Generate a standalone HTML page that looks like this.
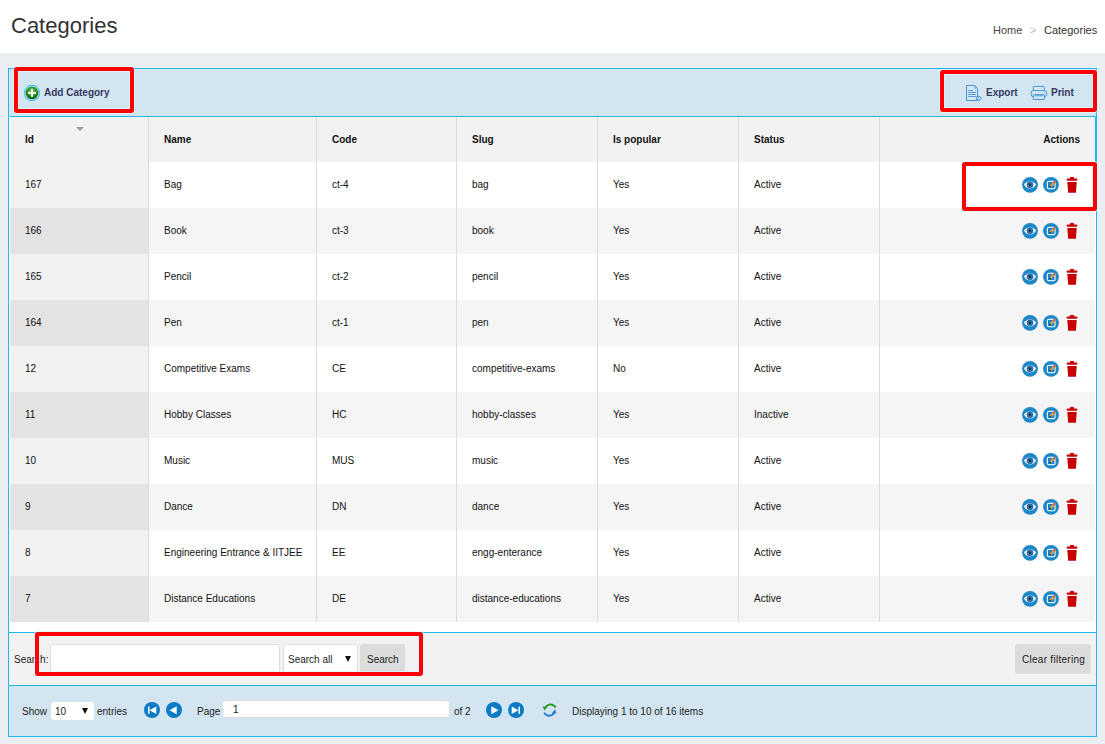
<!DOCTYPE html>
<html><head><meta charset="utf-8">
<style>
*{box-sizing:border-box}
html,body{margin:0;padding:0}
body{width:1105px;height:744px;overflow:hidden;background:#eaeef3;font-family:"Liberation Sans",sans-serif;color:#333;position:relative}
.box,.th,.td,.abs,.acts{position:absolute}
.hdr{position:absolute;left:0;top:0;width:1105px;height:53px;background:#fff}
.title{position:absolute;left:11px;top:13px;font-size:22px;color:#333;white-space:nowrap;line-height:25px}
.bc{position:absolute;top:24px;left:993px;font-size:11px;color:#444;white-space:nowrap;line-height:13px}
.bc .sep{position:absolute;left:37px;color:#bbb}
.bc .cur{position:absolute;left:51px;color:#333}
.th{font-size:10px;font-weight:bold;color:#111;line-height:45px;white-space:nowrap}
.td{font-size:10px;color:#111;line-height:46px;white-space:nowrap}
.sort{position:absolute;left:76px;top:127px;width:0;height:0;border-left:4px solid transparent;border-right:4px solid transparent;border-top:4px solid #999}
.acts{left:1021px;height:46px;width:60px}
.tbt{font-size:10px;font-weight:bold;color:#353a60;line-height:12px;white-space:nowrap}
.txt{font-size:10px;color:#222;line-height:12px;white-space:nowrap}
.inp{background:#fff;border:1px solid #dedede;border-radius:3px}
.inp2{background:#fff;border-radius:3px}
.btn{background:#dcdcdc;border-radius:3px}
.tri{width:0;height:0;border-left:3.5px solid transparent;border-right:3.5px solid transparent;border-top:6px solid #111}
.red{position:absolute;border:4px solid #ff0000;border-radius:3px;box-shadow:0 0 0 1px rgba(215,250,255,0.7),inset 0 0 0 1px rgba(215,250,255,0.7)}

</style></head><body>
<div class="hdr"><div class="title">Categories</div><div class="bc"><span class="home">Home</span><span class="sep">&gt;</span><span class="cur">Categories</span></div></div>
<div class="box" style="left:8px;top:68px;width:1089px;height:669px;border:1px solid #1db9ee;background:#fff"></div>
<div class="box" style="left:9px;top:69px;width:1087px;height:47px;background:#d3e5f0"></div>
<div class="box" style="left:10px;top:116px;width:1086px;height:1px;background:#1db9ee"></div>
<div class="box" style="left:1095px;top:116px;width:1px;height:46px;background:#1db9ee"></div>
<div class="box" style="left:10px;top:117px;width:1085px;height:45px;background:#f2f2f2"></div>
<div class="box" style="left:10px;top:162px;width:1085px;height:46px;background:#fff"></div><div class="box" style="left:10px;top:162px;width:138px;height:46px;background:#f2f2f2"></div>
<div class="box" style="left:10px;top:208px;width:1085px;height:46px;background:#f5f5f5"></div><div class="box" style="left:10px;top:208px;width:138px;height:46px;background:#e3e3e3"></div>
<div class="box" style="left:10px;top:254px;width:1085px;height:46px;background:#fff"></div><div class="box" style="left:10px;top:254px;width:138px;height:46px;background:#f2f2f2"></div>
<div class="box" style="left:10px;top:300px;width:1085px;height:46px;background:#f5f5f5"></div><div class="box" style="left:10px;top:300px;width:138px;height:46px;background:#e3e3e3"></div>
<div class="box" style="left:10px;top:346px;width:1085px;height:46px;background:#fff"></div><div class="box" style="left:10px;top:346px;width:138px;height:46px;background:#f2f2f2"></div>
<div class="box" style="left:10px;top:392px;width:1085px;height:46px;background:#f5f5f5"></div><div class="box" style="left:10px;top:392px;width:138px;height:46px;background:#e3e3e3"></div>
<div class="box" style="left:10px;top:438px;width:1085px;height:46px;background:#fff"></div><div class="box" style="left:10px;top:438px;width:138px;height:46px;background:#f2f2f2"></div>
<div class="box" style="left:10px;top:484px;width:1085px;height:46px;background:#f5f5f5"></div><div class="box" style="left:10px;top:484px;width:138px;height:46px;background:#e3e3e3"></div>
<div class="box" style="left:10px;top:530px;width:1085px;height:46px;background:#fff"></div><div class="box" style="left:10px;top:530px;width:138px;height:46px;background:#f2f2f2"></div>
<div class="box" style="left:10px;top:576px;width:1085px;height:46px;background:#f5f5f5"></div><div class="box" style="left:10px;top:576px;width:138px;height:46px;background:#e3e3e3"></div>
<div class="box" style="left:148px;top:117px;width:1px;height:505px;background:#dcdcdc"></div><div class="box" style="left:316px;top:117px;width:1px;height:505px;background:#dcdcdc"></div><div class="box" style="left:456px;top:117px;width:1px;height:505px;background:#dcdcdc"></div><div class="box" style="left:597px;top:117px;width:1px;height:505px;background:#dcdcdc"></div><div class="box" style="left:738px;top:117px;width:1px;height:505px;background:#dcdcdc"></div><div class="box" style="left:879px;top:117px;width:1px;height:505px;background:#dcdcdc"></div>
<div class="th" style="left:25px;top:117px">Id</div><div class="th" style="left:164px;top:117px">Name</div><div class="th" style="left:332px;top:117px">Code</div><div class="th" style="left:472px;top:117px">Slug</div><div class="th" style="left:613px;top:117px">Is popular</div><div class="th" style="left:754px;top:117px">Status</div><div class="th" style="right:25px;top:117px">Actions</div>
<div class="sort"></div>
<div class="td" style="left:25px;top:162px">167</div><div class="td" style="left:164px;top:162px">Bag</div><div class="td" style="left:332px;top:162px">ct-4</div><div class="td" style="left:472px;top:162px">bag</div><div class="td" style="left:613px;top:162px">Yes</div><div class="td" style="left:754px;top:162px">Active</div><div class="acts" style="top:162px"><svg width="60" height="46" viewBox="0 0 60 46" style="position:absolute;left:0;top:0"><circle cx="9" cy="22.8" r="7.9" fill="#1d87c8"/><path d="M3,22.8 C6,17.9 12,17.9 15,22.8 C12,27.7 6,27.7 3,22.8 Z" fill="#fff"/><circle cx="9" cy="22.8" r="3" fill="#2a7cc2" stroke="#17487a" stroke-width="0.7"/><circle cx="9" cy="22.8" r="1.2" fill="#0d2440"/><circle cx="30" cy="22.8" r="7.9" fill="#1d87c8"/><rect x="26.4" y="19.3" width="7.6" height="7.4" rx="1.2" fill="#1a80d0" stroke="#e2f2fd" stroke-width="1.2"/><path d="M29.6,24.2 L32.9,20.6" stroke="#f5a31e" stroke-width="2.2"/><path d="M32.6,20.9 L33.9,19.5" stroke="#e8363e" stroke-width="2"/><path d="M28.9,25 L29.7,24.1" stroke="#1b2a4a" stroke-width="1.2"/><rect x="48.8" y="14.9" width="4.4" height="2.2" rx="1" fill="#c80000"/><rect x="45.6" y="16.4" width="10.8" height="2.4" rx="1" fill="#c80000"/><path d="M46.3,20 L55.7,20 L54.9,30.8 L47.2,30.8 Z" fill="#c80000"/></svg>
</div>
<div class="td" style="left:25px;top:208px">166</div><div class="td" style="left:164px;top:208px">Book</div><div class="td" style="left:332px;top:208px">ct-3</div><div class="td" style="left:472px;top:208px">book</div><div class="td" style="left:613px;top:208px">Yes</div><div class="td" style="left:754px;top:208px">Active</div><div class="acts" style="top:208px"><svg width="60" height="46" viewBox="0 0 60 46" style="position:absolute;left:0;top:0"><circle cx="9" cy="22.8" r="7.9" fill="#1d87c8"/><path d="M3,22.8 C6,17.9 12,17.9 15,22.8 C12,27.7 6,27.7 3,22.8 Z" fill="#fff"/><circle cx="9" cy="22.8" r="3" fill="#2a7cc2" stroke="#17487a" stroke-width="0.7"/><circle cx="9" cy="22.8" r="1.2" fill="#0d2440"/><circle cx="30" cy="22.8" r="7.9" fill="#1d87c8"/><rect x="26.4" y="19.3" width="7.6" height="7.4" rx="1.2" fill="#1a80d0" stroke="#e2f2fd" stroke-width="1.2"/><path d="M29.6,24.2 L32.9,20.6" stroke="#f5a31e" stroke-width="2.2"/><path d="M32.6,20.9 L33.9,19.5" stroke="#e8363e" stroke-width="2"/><path d="M28.9,25 L29.7,24.1" stroke="#1b2a4a" stroke-width="1.2"/><rect x="48.8" y="14.9" width="4.4" height="2.2" rx="1" fill="#c80000"/><rect x="45.6" y="16.4" width="10.8" height="2.4" rx="1" fill="#c80000"/><path d="M46.3,20 L55.7,20 L54.9,30.8 L47.2,30.8 Z" fill="#c80000"/></svg>
</div>
<div class="td" style="left:25px;top:254px">165</div><div class="td" style="left:164px;top:254px">Pencil</div><div class="td" style="left:332px;top:254px">ct-2</div><div class="td" style="left:472px;top:254px">pencil</div><div class="td" style="left:613px;top:254px">Yes</div><div class="td" style="left:754px;top:254px">Active</div><div class="acts" style="top:254px"><svg width="60" height="46" viewBox="0 0 60 46" style="position:absolute;left:0;top:0"><circle cx="9" cy="22.8" r="7.9" fill="#1d87c8"/><path d="M3,22.8 C6,17.9 12,17.9 15,22.8 C12,27.7 6,27.7 3,22.8 Z" fill="#fff"/><circle cx="9" cy="22.8" r="3" fill="#2a7cc2" stroke="#17487a" stroke-width="0.7"/><circle cx="9" cy="22.8" r="1.2" fill="#0d2440"/><circle cx="30" cy="22.8" r="7.9" fill="#1d87c8"/><rect x="26.4" y="19.3" width="7.6" height="7.4" rx="1.2" fill="#1a80d0" stroke="#e2f2fd" stroke-width="1.2"/><path d="M29.6,24.2 L32.9,20.6" stroke="#f5a31e" stroke-width="2.2"/><path d="M32.6,20.9 L33.9,19.5" stroke="#e8363e" stroke-width="2"/><path d="M28.9,25 L29.7,24.1" stroke="#1b2a4a" stroke-width="1.2"/><rect x="48.8" y="14.9" width="4.4" height="2.2" rx="1" fill="#c80000"/><rect x="45.6" y="16.4" width="10.8" height="2.4" rx="1" fill="#c80000"/><path d="M46.3,20 L55.7,20 L54.9,30.8 L47.2,30.8 Z" fill="#c80000"/></svg>
</div>
<div class="td" style="left:25px;top:300px">164</div><div class="td" style="left:164px;top:300px">Pen</div><div class="td" style="left:332px;top:300px">ct-1</div><div class="td" style="left:472px;top:300px">pen</div><div class="td" style="left:613px;top:300px">Yes</div><div class="td" style="left:754px;top:300px">Active</div><div class="acts" style="top:300px"><svg width="60" height="46" viewBox="0 0 60 46" style="position:absolute;left:0;top:0"><circle cx="9" cy="22.8" r="7.9" fill="#1d87c8"/><path d="M3,22.8 C6,17.9 12,17.9 15,22.8 C12,27.7 6,27.7 3,22.8 Z" fill="#fff"/><circle cx="9" cy="22.8" r="3" fill="#2a7cc2" stroke="#17487a" stroke-width="0.7"/><circle cx="9" cy="22.8" r="1.2" fill="#0d2440"/><circle cx="30" cy="22.8" r="7.9" fill="#1d87c8"/><rect x="26.4" y="19.3" width="7.6" height="7.4" rx="1.2" fill="#1a80d0" stroke="#e2f2fd" stroke-width="1.2"/><path d="M29.6,24.2 L32.9,20.6" stroke="#f5a31e" stroke-width="2.2"/><path d="M32.6,20.9 L33.9,19.5" stroke="#e8363e" stroke-width="2"/><path d="M28.9,25 L29.7,24.1" stroke="#1b2a4a" stroke-width="1.2"/><rect x="48.8" y="14.9" width="4.4" height="2.2" rx="1" fill="#c80000"/><rect x="45.6" y="16.4" width="10.8" height="2.4" rx="1" fill="#c80000"/><path d="M46.3,20 L55.7,20 L54.9,30.8 L47.2,30.8 Z" fill="#c80000"/></svg>
</div>
<div class="td" style="left:25px;top:346px">12</div><div class="td" style="left:164px;top:346px">Competitive Exams</div><div class="td" style="left:332px;top:346px">CE</div><div class="td" style="left:472px;top:346px">competitive-exams</div><div class="td" style="left:613px;top:346px">No</div><div class="td" style="left:754px;top:346px">Active</div><div class="acts" style="top:346px"><svg width="60" height="46" viewBox="0 0 60 46" style="position:absolute;left:0;top:0"><circle cx="9" cy="22.8" r="7.9" fill="#1d87c8"/><path d="M3,22.8 C6,17.9 12,17.9 15,22.8 C12,27.7 6,27.7 3,22.8 Z" fill="#fff"/><circle cx="9" cy="22.8" r="3" fill="#2a7cc2" stroke="#17487a" stroke-width="0.7"/><circle cx="9" cy="22.8" r="1.2" fill="#0d2440"/><circle cx="30" cy="22.8" r="7.9" fill="#1d87c8"/><rect x="26.4" y="19.3" width="7.6" height="7.4" rx="1.2" fill="#1a80d0" stroke="#e2f2fd" stroke-width="1.2"/><path d="M29.6,24.2 L32.9,20.6" stroke="#f5a31e" stroke-width="2.2"/><path d="M32.6,20.9 L33.9,19.5" stroke="#e8363e" stroke-width="2"/><path d="M28.9,25 L29.7,24.1" stroke="#1b2a4a" stroke-width="1.2"/><rect x="48.8" y="14.9" width="4.4" height="2.2" rx="1" fill="#c80000"/><rect x="45.6" y="16.4" width="10.8" height="2.4" rx="1" fill="#c80000"/><path d="M46.3,20 L55.7,20 L54.9,30.8 L47.2,30.8 Z" fill="#c80000"/></svg>
</div>
<div class="td" style="left:25px;top:392px">11</div><div class="td" style="left:164px;top:392px">Hobby Classes</div><div class="td" style="left:332px;top:392px">HC</div><div class="td" style="left:472px;top:392px">hobby-classes</div><div class="td" style="left:613px;top:392px">Yes</div><div class="td" style="left:754px;top:392px">Inactive</div><div class="acts" style="top:392px"><svg width="60" height="46" viewBox="0 0 60 46" style="position:absolute;left:0;top:0"><circle cx="9" cy="22.8" r="7.9" fill="#1d87c8"/><path d="M3,22.8 C6,17.9 12,17.9 15,22.8 C12,27.7 6,27.7 3,22.8 Z" fill="#fff"/><circle cx="9" cy="22.8" r="3" fill="#2a7cc2" stroke="#17487a" stroke-width="0.7"/><circle cx="9" cy="22.8" r="1.2" fill="#0d2440"/><circle cx="30" cy="22.8" r="7.9" fill="#1d87c8"/><rect x="26.4" y="19.3" width="7.6" height="7.4" rx="1.2" fill="#1a80d0" stroke="#e2f2fd" stroke-width="1.2"/><path d="M29.6,24.2 L32.9,20.6" stroke="#f5a31e" stroke-width="2.2"/><path d="M32.6,20.9 L33.9,19.5" stroke="#e8363e" stroke-width="2"/><path d="M28.9,25 L29.7,24.1" stroke="#1b2a4a" stroke-width="1.2"/><rect x="48.8" y="14.9" width="4.4" height="2.2" rx="1" fill="#c80000"/><rect x="45.6" y="16.4" width="10.8" height="2.4" rx="1" fill="#c80000"/><path d="M46.3,20 L55.7,20 L54.9,30.8 L47.2,30.8 Z" fill="#c80000"/></svg>
</div>
<div class="td" style="left:25px;top:438px">10</div><div class="td" style="left:164px;top:438px">Music</div><div class="td" style="left:332px;top:438px">MUS</div><div class="td" style="left:472px;top:438px">music</div><div class="td" style="left:613px;top:438px">Yes</div><div class="td" style="left:754px;top:438px">Active</div><div class="acts" style="top:438px"><svg width="60" height="46" viewBox="0 0 60 46" style="position:absolute;left:0;top:0"><circle cx="9" cy="22.8" r="7.9" fill="#1d87c8"/><path d="M3,22.8 C6,17.9 12,17.9 15,22.8 C12,27.7 6,27.7 3,22.8 Z" fill="#fff"/><circle cx="9" cy="22.8" r="3" fill="#2a7cc2" stroke="#17487a" stroke-width="0.7"/><circle cx="9" cy="22.8" r="1.2" fill="#0d2440"/><circle cx="30" cy="22.8" r="7.9" fill="#1d87c8"/><rect x="26.4" y="19.3" width="7.6" height="7.4" rx="1.2" fill="#1a80d0" stroke="#e2f2fd" stroke-width="1.2"/><path d="M29.6,24.2 L32.9,20.6" stroke="#f5a31e" stroke-width="2.2"/><path d="M32.6,20.9 L33.9,19.5" stroke="#e8363e" stroke-width="2"/><path d="M28.9,25 L29.7,24.1" stroke="#1b2a4a" stroke-width="1.2"/><rect x="48.8" y="14.9" width="4.4" height="2.2" rx="1" fill="#c80000"/><rect x="45.6" y="16.4" width="10.8" height="2.4" rx="1" fill="#c80000"/><path d="M46.3,20 L55.7,20 L54.9,30.8 L47.2,30.8 Z" fill="#c80000"/></svg>
</div>
<div class="td" style="left:25px;top:484px">9</div><div class="td" style="left:164px;top:484px">Dance</div><div class="td" style="left:332px;top:484px">DN</div><div class="td" style="left:472px;top:484px">dance</div><div class="td" style="left:613px;top:484px">Yes</div><div class="td" style="left:754px;top:484px">Active</div><div class="acts" style="top:484px"><svg width="60" height="46" viewBox="0 0 60 46" style="position:absolute;left:0;top:0"><circle cx="9" cy="22.8" r="7.9" fill="#1d87c8"/><path d="M3,22.8 C6,17.9 12,17.9 15,22.8 C12,27.7 6,27.7 3,22.8 Z" fill="#fff"/><circle cx="9" cy="22.8" r="3" fill="#2a7cc2" stroke="#17487a" stroke-width="0.7"/><circle cx="9" cy="22.8" r="1.2" fill="#0d2440"/><circle cx="30" cy="22.8" r="7.9" fill="#1d87c8"/><rect x="26.4" y="19.3" width="7.6" height="7.4" rx="1.2" fill="#1a80d0" stroke="#e2f2fd" stroke-width="1.2"/><path d="M29.6,24.2 L32.9,20.6" stroke="#f5a31e" stroke-width="2.2"/><path d="M32.6,20.9 L33.9,19.5" stroke="#e8363e" stroke-width="2"/><path d="M28.9,25 L29.7,24.1" stroke="#1b2a4a" stroke-width="1.2"/><rect x="48.8" y="14.9" width="4.4" height="2.2" rx="1" fill="#c80000"/><rect x="45.6" y="16.4" width="10.8" height="2.4" rx="1" fill="#c80000"/><path d="M46.3,20 L55.7,20 L54.9,30.8 L47.2,30.8 Z" fill="#c80000"/></svg>
</div>
<div class="td" style="left:25px;top:530px">8</div><div class="td" style="left:164px;top:530px">Engineering Entrance &amp; IITJEE</div><div class="td" style="left:332px;top:530px">EE</div><div class="td" style="left:472px;top:530px">engg-enterance</div><div class="td" style="left:613px;top:530px">Yes</div><div class="td" style="left:754px;top:530px">Active</div><div class="acts" style="top:530px"><svg width="60" height="46" viewBox="0 0 60 46" style="position:absolute;left:0;top:0"><circle cx="9" cy="22.8" r="7.9" fill="#1d87c8"/><path d="M3,22.8 C6,17.9 12,17.9 15,22.8 C12,27.7 6,27.7 3,22.8 Z" fill="#fff"/><circle cx="9" cy="22.8" r="3" fill="#2a7cc2" stroke="#17487a" stroke-width="0.7"/><circle cx="9" cy="22.8" r="1.2" fill="#0d2440"/><circle cx="30" cy="22.8" r="7.9" fill="#1d87c8"/><rect x="26.4" y="19.3" width="7.6" height="7.4" rx="1.2" fill="#1a80d0" stroke="#e2f2fd" stroke-width="1.2"/><path d="M29.6,24.2 L32.9,20.6" stroke="#f5a31e" stroke-width="2.2"/><path d="M32.6,20.9 L33.9,19.5" stroke="#e8363e" stroke-width="2"/><path d="M28.9,25 L29.7,24.1" stroke="#1b2a4a" stroke-width="1.2"/><rect x="48.8" y="14.9" width="4.4" height="2.2" rx="1" fill="#c80000"/><rect x="45.6" y="16.4" width="10.8" height="2.4" rx="1" fill="#c80000"/><path d="M46.3,20 L55.7,20 L54.9,30.8 L47.2,30.8 Z" fill="#c80000"/></svg>
</div>
<div class="td" style="left:25px;top:576px">7</div><div class="td" style="left:164px;top:576px">Distance Educations</div><div class="td" style="left:332px;top:576px">DE</div><div class="td" style="left:472px;top:576px">distance-educations</div><div class="td" style="left:613px;top:576px">Yes</div><div class="td" style="left:754px;top:576px">Active</div><div class="acts" style="top:576px"><svg width="60" height="46" viewBox="0 0 60 46" style="position:absolute;left:0;top:0"><circle cx="9" cy="22.8" r="7.9" fill="#1d87c8"/><path d="M3,22.8 C6,17.9 12,17.9 15,22.8 C12,27.7 6,27.7 3,22.8 Z" fill="#fff"/><circle cx="9" cy="22.8" r="3" fill="#2a7cc2" stroke="#17487a" stroke-width="0.7"/><circle cx="9" cy="22.8" r="1.2" fill="#0d2440"/><circle cx="30" cy="22.8" r="7.9" fill="#1d87c8"/><rect x="26.4" y="19.3" width="7.6" height="7.4" rx="1.2" fill="#1a80d0" stroke="#e2f2fd" stroke-width="1.2"/><path d="M29.6,24.2 L32.9,20.6" stroke="#f5a31e" stroke-width="2.2"/><path d="M32.6,20.9 L33.9,19.5" stroke="#e8363e" stroke-width="2"/><path d="M28.9,25 L29.7,24.1" stroke="#1b2a4a" stroke-width="1.2"/><rect x="48.8" y="14.9" width="4.4" height="2.2" rx="1" fill="#c80000"/><rect x="45.6" y="16.4" width="10.8" height="2.4" rx="1" fill="#c80000"/><path d="M46.3,20 L55.7,20 L54.9,30.8 L47.2,30.8 Z" fill="#c80000"/></svg>
</div>
<div class="box" style="left:9px;top:632px;width:1087px;height:1px;background:#1db9ee"></div><div class="box" style="left:9px;top:633px;width:1087px;height:52px;background:#f2f2f2"></div><div class="box" style="left:9px;top:685px;width:1087px;height:1px;background:#1db9ee"></div><div class="box" style="left:9px;top:686px;width:1087px;height:50px;background:#d3e5f0"></div>
<!-- toolbar -->
<svg class="abs" style="left:23px;top:84px" width="18" height="18" viewBox="0 0 18 18"><defs><radialGradient id="gg" cx="50%" cy="35%" r="65%"><stop offset="0" stop-color="#6cc24a"/><stop offset="0.6" stop-color="#2a8a1a"/><stop offset="1" stop-color="#0d5a08"/></radialGradient></defs><circle cx="9" cy="8.9" r="7.5" fill="none" stroke="#3cc6f4" stroke-width="1.2"/><circle cx="9" cy="8.9" r="6.3" fill="url(#gg)"/><rect x="5.1" y="7.8" width="7.8" height="2.3" fill="#fff"/><rect x="8.1" y="4.8" width="1.9" height="8" fill="#fff"/></svg>
<div class="abs tbt" style="left:44px;top:87px">Add Category</div>
<svg class="abs" style="left:965px;top:84px" width="18" height="18" viewBox="0 0 18 18" fill="none" stroke="#4597d2" stroke-width="1"><path d="M1.5,1.5 H9.5 L12.5,4.5 V16.5 H1.5 Z"/><circle cx="10.5" cy="3.5" r="0.9"/><path d="M3.2,6.5 H8 M3.2,8.5 H10.9 M3.2,10.5 H10.9 M3.2,12.5 H10.9" stroke-width="0.9"/><circle cx="10.4" cy="6.5" r="0.45" fill="#4597d2" stroke="none"/><path d="M11.4,13.1 H13.9 V11.9 L16.6,14.3 L13.9,16.7 V15.5 H11.4 Z" fill="#d3e5f0"/></svg>
<div class="abs tbt" style="left:986px;top:87px">Export</div>
<svg class="abs" style="left:1030px;top:85px" width="18" height="16" viewBox="0 0 18 16" fill="none" stroke="#4b9ad5" stroke-width="1"><rect x="3.3" y="1.4" width="11" height="4.8" rx="0.8"/><rect x="1.2" y="5.6" width="15.4" height="6" rx="1.8" fill="#d3e5f0"/><rect x="3.3" y="9.6" width="11.2" height="4.9" rx="0.6" fill="#d3e5f0"/><path d="M4.8,10.8 H13"/><circle cx="14.2" cy="7.3" r="0.6" fill="#4b9ad5" stroke="none"/></svg>
<div class="abs tbt" style="left:1051px;top:87px">Print</div>
<!-- search bar -->
<div class="abs txt" style="left:14px;top:654px">Search:</div>
<div class="abs inp" style="left:50px;top:644px;width:230px;height:30px"></div>
<div class="abs inp" style="left:283px;top:644px;width:75px;height:30px"></div>
<div class="abs txt" style="left:288px;top:654px">Search all</div>
<div class="abs tri" style="left:345px;top:656px"></div>
<div class="abs btn" style="left:360px;top:644px;width:45px;height:30px"></div>
<div class="abs txt" style="left:367px;top:654px">Search</div>
<div class="abs btn" style="left:1015px;top:644px;width:76px;height:30px"></div>
<div class="abs txt" style="left:1022px;top:654px;letter-spacing:0.28px">Clear filtering</div>
<!-- pager -->
<div class="abs txt" style="left:22px;top:706px">Show</div>
<div class="abs inp2" style="left:51px;top:702px;width:43px;height:18px"></div>
<div class="abs txt" style="left:55px;top:706px">10</div>
<div class="abs tri" style="left:82px;top:708px"></div>
<div class="abs txt" style="left:97px;top:706px">entries</div>
<svg class="abs" style="left:143px;top:701px" width="18" height="18" viewBox="0 0 18 18"><circle cx="9" cy="9" r="8" fill="#0b7bc5"/><rect x="5" y="5.6" width="1.5" height="7.2" fill="#fff"/><path d="M6.5,9.2 L13.3,5.4 V13 Z" fill="#fff"/></svg>
<svg class="abs" style="left:165px;top:701px" width="18" height="18" viewBox="0 0 18 18"><circle cx="9" cy="9" r="8" fill="#0b7bc5"/><path d="M4.5,9.2 L11.7,5.2 V13.2 Z" fill="#fff"/></svg>
<div class="abs txt" style="left:197px;top:706px">Page</div>
<div class="abs inp2" style="left:222px;top:700px;width:228px;height:18px;border:1px solid #dcdcdc"></div>
<div class="abs txt" style="left:233px;top:704px">1</div>
<div class="abs txt" style="left:454px;top:706px">of 2</div>
<svg class="abs" style="left:485px;top:701px" width="18" height="18" viewBox="0 0 18 18"><circle cx="9" cy="9" r="8" fill="#0b7bc5"/><path d="M6.3,5.2 L13.5,9.2 L6.3,13.2 Z" fill="#fff"/></svg>
<svg class="abs" style="left:507px;top:701px" width="18" height="18" viewBox="0 0 18 18"><circle cx="9" cy="9" r="8" fill="#0b7bc5"/><path d="M4.7,5.4 L11.5,9.2 L4.7,13 Z" fill="#fff"/><rect x="11.5" y="5.6" width="1.5" height="7.2" fill="#fff"/></svg>
<svg class="abs" style="left:541px;top:701px" width="18" height="18" viewBox="0 0 18 18"><path d="M4.2,7.6 A5.6,5.6 0 0 1 14.6,6.6" fill="none" stroke="#2f9e2c" stroke-width="1.9"/><path d="M1.6,5.6 L6.6,5.8 L3.4,9.6 Z" fill="#2f9e2c"/><path d="M13.4,11.2 A5.6,5.6 0 0 1 3.2,11.6" fill="none" stroke="#2b80d2" stroke-width="1.9"/><path d="M15.6,12.6 L10.8,12.2 L14,8.2 Z" fill="#2b80d2"/></svg>
<div class="abs txt" style="left:572px;top:706px">Displaying 1 to 10 of 16 items</div>
<!-- red boxes -->
<div class="red" style="left:14px;top:67px;width:120px;height:46px"></div>
<div class="red" style="left:940px;top:70px;width:157px;height:42px"></div>
<div class="red" style="left:962px;top:162px;width:135px;height:49px"></div>
<div class="red" style="left:35px;top:632px;width:388px;height:44px"></div>
</body></html>
